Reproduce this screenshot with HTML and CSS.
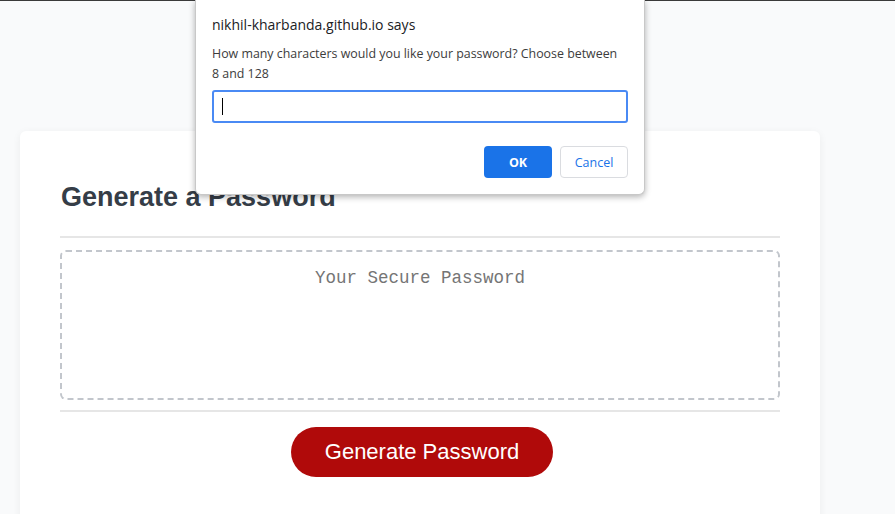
FILE: index.html
```html
<!DOCTYPE html>
<html>
<head>
<meta charset="utf-8">
<link rel="stylesheet" href="styles.css">
</head>
<body>
<div class="page">
  <div class="card">
    <h2 class="title">Generate a Password</h2>
    <div class="rule"></div>
    <div class="output">Your Secure Password</div>
    <div class="rule rule-bottom"></div>
    <div class="actions">
      <button class="generate">Generate Password</button>
    </div>
  </div>
</div>
<div class="dialog">
  <div class="dialog-title">nikhil-kharbanda.github.io says</div>
  <div class="dialog-msg">How many characters would you like your password? Choose between 8 and 128</div>
  <div class="dialog-input"><span class="caret"></span></div>
  <div class="dialog-buttons">
    <button class="btn-ok">OK</button>
    <button class="btn-cancel">Cancel</button>
  </div>
</div>
</body>
</html>
```
FILE: styles.css
```css
html, body {
  margin: 0;
  padding: 0;
}
body {
  background: #f9fafb;
  border-top: 1px solid #3a3a3a;
  height: 513px;
  overflow: hidden;
  font-family: "Liberation Sans", Arial, sans-serif;
}
.page {
  padding: 130px 0 0 20px;
}
.card {
  width: 720px;
  background: #fff;
  border-radius: 6px;
  padding: 49px 40px 40px 40px;
  box-shadow: 0 2px 8px rgba(0,0,0,0.06);
  height: 400px;
}
.title {
  margin: 0;
  font-size: 27px;
  line-height: 34px;
  font-weight: bold;
  color: #353d47;
  padding-left: 1px;
}
.rule {
  height: 2px;
  background: #e6e6e6;
  margin-top: 22px;
}
.rule-bottom {
  margin-top: 10px;
}
.output {
  margin-top: 12px;
  height: 130px;
  border: 2px dashed #c2c6cc;
  border-radius: 6px;
  padding-top: 16px;
  text-align: center;
  font-family: "Liberation Mono", "DejaVu Sans Mono", monospace;
  font-size: 17.5px;
  line-height: 21px;
  color: #757575;
}
.actions {
  display: flex;
  justify-content: center;
  margin-top: 15px;
}
.generate {
  width: 262px;
  height: 50px;
  border: none;
  border-radius: 25px;
  background: #b00a0a;
  color: #fff;
  font-family: "Liberation Sans", Arial, sans-serif;
  font-size: 22px;
  margin-left: 4px;
}
.dialog {
  position: absolute;
  left: 195px;
  top: 0;
  width: 450px;
  height: 195px;
  box-sizing: border-box;
  background: #fff;
  border: 1px solid #c8c8c8;
  border-top: none;
  border-radius: 0 0 6px 6px;
  box-shadow: 0 2px 6px rgba(0,0,0,0.3);
  padding: 15px 16px 0 16px;
  font-family: "Open Sans", "Noto Sans", sans-serif;
  color: #202124;
}
.dialog-title {
  font-size: 14px;
  line-height: 20px;
}
.dialog-msg {
  margin-top: 9px;
  max-width: 406px;
  font-size: 12.4px;
  line-height: 20px;
  color: #3c3c3c;
}
.dialog-input {
  margin-top: 6px;
  height: 33px;
  box-sizing: border-box;
  border: 2px solid #4a8af4;
  border-radius: 3px;
  padding: 6px 8px;
}
.caret {
  display: block;
  width: 1px;
  height: 17px;
  background: #000;
}
.dialog-buttons {
  display: flex;
  justify-content: flex-end;
  gap: 8px;
  margin-top: 23px;
}
.btn-ok, .btn-cancel {
  width: 68px;
  height: 32px;
  border-radius: 4px;
  font-family: "Open Sans", "Noto Sans", sans-serif;
  font-size: 12.5px;
}
.btn-ok {
  background: #1a73e8;
  border: none;
  color: #fff;
  font-weight: bold;
}
.btn-cancel {
  background: #fff;
  border: 1px solid #dadce0;
  color: #1a73e8;
}
```
